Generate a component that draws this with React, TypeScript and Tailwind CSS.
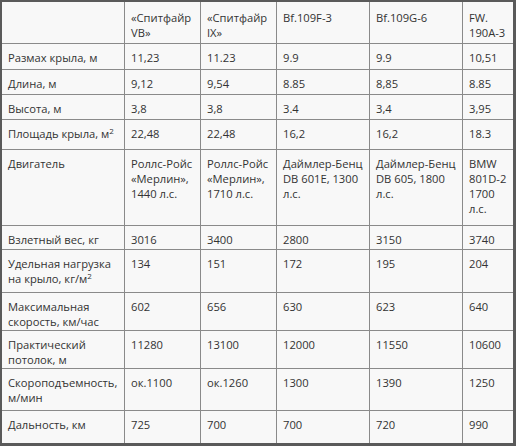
import React from "react";

type Cell = React.ReactNode;

const M2 = (
  <>
    м<sup className="text-[8px] leading-none">2</sup>
  </>
);

const header: Cell[] = [
  "",
  <>«Спитфайр<br />VB»</>,
  <>«Спитфайр<br />IX»</>,
  "Bf.109F-3",
  "Bf.109G-6",
  <>FW.<br />190A-3</>,
];

const rows: { h: string; cells: Cell[] }[] = [
  { h: "h-[26px]", cells: ["Размах крыла, м", "11,23", "11.23", "9.9", "9.9", "10,51"] },
  { h: "h-[25px]", cells: ["Длина, м", "9,12", "9,54", "8.85", "8,85", "8.85"] },
  { h: "h-[25px]", cells: ["Высота, м", "3,8", "3,8", "3.4", "3,4", "3,95"] },
  { h: "h-[30px]", cells: [<>Площадь крыла, {M2}</>, "22,48", "22,48", "16,2", "16,2", "18.3"] },
  {
    h: "h-[76px]",
    cells: [
      "Двигатель",
      <>Роллс-Ройс<br />«Мерлин»,<br />1440 л.с.</>,
      <>Роллс-Ройс<br />«Мерлин»,<br />1710 л.с.</>,
      <>Даймлер-Бенц<br />DB 601E, 1300<br />л.с.</>,
      <>Даймлер-Бенц<br />DB 605, 1800<br />л.с.</>,
      <>BMW<br />801D-2<br />1700<br />л.с.</>,
    ],
  },
  { h: "h-[24px]", cells: ["Взлетный вес, кг", "3016", "3400", "2800", "3150", "3740"] },
  {
    h: "h-[43px]",
    cells: [<>Удельная нагрузка<br />на крыло, кг/{M2}</>, "134", "151", "172", "195", "204"],
  },
  { h: "h-[38px]", cells: [<>Максимальная<br />скорость, км/час</>, "602", "656", "630", "623", "640"] },
  { h: "h-[38px]", cells: [<>Практический<br />потолок, м</>, "11280", "13100", "12000", "11550", "10600"] },
  { h: "h-[42px]", cells: [<>Скороподъемность,<br />м/мин</>, "ок.1100", "ок.1260", "1300", "1390", "1250"] },
  { h: "h-[32px]", cells: ["Дальность, км", "725", "700", "700", "720", "990"] },
];

export default function App() {
  return (
    <div className="w-[516px] h-[446px] bg-[#f8f8f8] border-t-2 border-l-2 border-r-[3px] border-b-[3px] border-[#5a5a5a] text-[#333] text-[11.2px] leading-[15px] font-['Open_Sans',sans-serif]">
      <table className="w-[511px] table-fixed border-separate border-spacing-0">
        <colgroup>
          <col className="w-[123px]" />
          <col className="w-[76px]" />
          <col className="w-[76px]" />
          <col className="w-[93px]" />
          <col className="w-[93px]" />
          <col className="w-[50px]" />
        </colgroup>
        <tbody>
          <tr className="h-[42px]">
            {header.map((c, i) => (
              <td
                key={i}
                className={`align-top pl-[6px] pt-[8px] whitespace-nowrap border-b border-[#8a8a8a] ${i < 5 ? "border-r" : ""}`}
              >
                {c}
              </td>
            ))}
          </tr>
          {rows.map((r, ri) => (
            <tr key={ri} className={r.h}>
              {r.cells.map((c, i) => (
                <td
                  key={i}
                  className={`align-top pl-[6px] pt-[6px] whitespace-nowrap border-[#8a8a8a] ${i < 5 ? "border-r" : ""} ${ri < rows.length - 1 ? "border-b" : ""}`}
                >
                  {c}
                </td>
              ))}
            </tr>
          ))}
        </tbody>
      </table>
    </div>
  );
}
